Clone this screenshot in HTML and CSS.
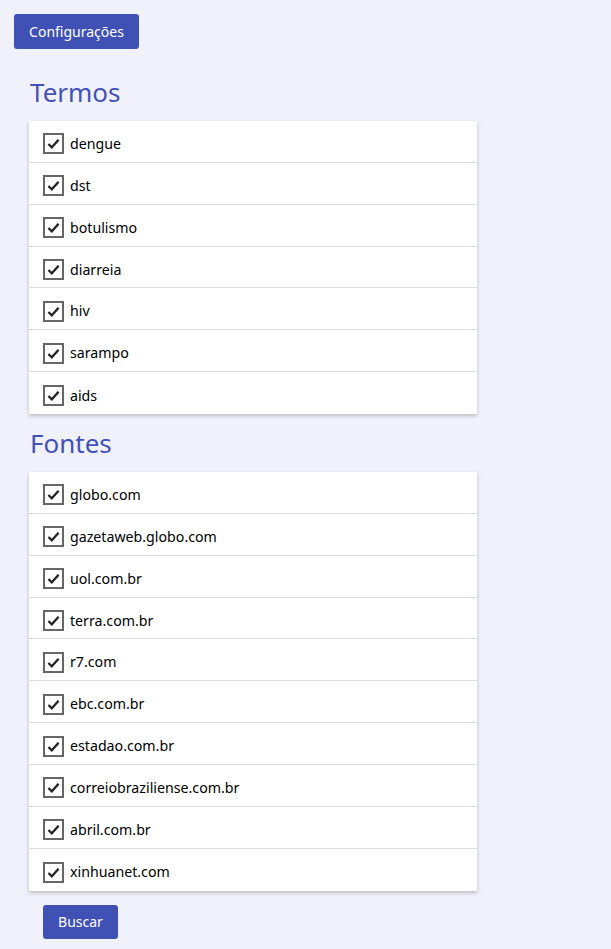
FILE: index.html
```html
<!DOCTYPE html>
<html lang="pt">
<head>
<meta charset="utf-8">
<link rel="stylesheet" href="styles.css">
</head>
<body>
<button class="btn btn-config">Configurações</button>
<div class="content">
  <h2 class="title">Termos</h2>
  <ul class="card">
    <li class="row"><span class="box"><svg viewBox="0 0 20 20"><path d="M4 10.5 L8 14.5 L16 5.5"/></svg></span><span class="label">dengue</span></li>
    <li class="row"><span class="box"><svg viewBox="0 0 20 20"><path d="M4 10.5 L8 14.5 L16 5.5"/></svg></span><span class="label">dst</span></li>
    <li class="row"><span class="box"><svg viewBox="0 0 20 20"><path d="M4 10.5 L8 14.5 L16 5.5"/></svg></span><span class="label">botulismo</span></li>
    <li class="row"><span class="box"><svg viewBox="0 0 20 20"><path d="M4 10.5 L8 14.5 L16 5.5"/></svg></span><span class="label">diarreia</span></li>
    <li class="row"><span class="box"><svg viewBox="0 0 20 20"><path d="M4 10.5 L8 14.5 L16 5.5"/></svg></span><span class="label">hiv</span></li>
    <li class="row"><span class="box"><svg viewBox="0 0 20 20"><path d="M4 10.5 L8 14.5 L16 5.5"/></svg></span><span class="label">sarampo</span></li>
    <li class="row"><span class="box"><svg viewBox="0 0 20 20"><path d="M4 10.5 L8 14.5 L16 5.5"/></svg></span><span class="label">aids</span></li>
  </ul>
  <h2 class="title">Fontes</h2>
  <ul class="card">
    <li class="row"><span class="box"><svg viewBox="0 0 20 20"><path d="M4 10.5 L8 14.5 L16 5.5"/></svg></span><span class="label">globo.com</span></li>
    <li class="row"><span class="box"><svg viewBox="0 0 20 20"><path d="M4 10.5 L8 14.5 L16 5.5"/></svg></span><span class="label">gazetaweb.globo.com</span></li>
    <li class="row"><span class="box"><svg viewBox="0 0 20 20"><path d="M4 10.5 L8 14.5 L16 5.5"/></svg></span><span class="label">uol.com.br</span></li>
    <li class="row"><span class="box"><svg viewBox="0 0 20 20"><path d="M4 10.5 L8 14.5 L16 5.5"/></svg></span><span class="label">terra.com.br</span></li>
    <li class="row"><span class="box"><svg viewBox="0 0 20 20"><path d="M4 10.5 L8 14.5 L16 5.5"/></svg></span><span class="label">r7.com</span></li>
    <li class="row"><span class="box"><svg viewBox="0 0 20 20"><path d="M4 10.5 L8 14.5 L16 5.5"/></svg></span><span class="label">ebc.com.br</span></li>
    <li class="row"><span class="box"><svg viewBox="0 0 20 20"><path d="M4 10.5 L8 14.5 L16 5.5"/></svg></span><span class="label">estadao.com.br</span></li>
    <li class="row"><span class="box"><svg viewBox="0 0 20 20"><path d="M4 10.5 L8 14.5 L16 5.5"/></svg></span><span class="label">correiobraziliense.com.br</span></li>
    <li class="row"><span class="box"><svg viewBox="0 0 20 20"><path d="M4 10.5 L8 14.5 L16 5.5"/></svg></span><span class="label">abril.com.br</span></li>
    <li class="row"><span class="box"><svg viewBox="0 0 20 20"><path d="M4 10.5 L8 14.5 L16 5.5"/></svg></span><span class="label">xinhuanet.com</span></li>
  </ul>
  <button class="btn btn-search">Buscar</button>
</div>
</body>
</html>
```
FILE: styles.css
```css
* { box-sizing: border-box; }
html, body { margin: 0; }
body {
  background: #f1f1fb;
  padding: 14px;
  font-family: "Noto Sans", "Open Sans", sans-serif;
  color: #000;
}
.btn {
  display: block;
  border: none;
  border-radius: 3px;
  background: #3f51b5;
  color: #fff;
  font-family: inherit;
  font-size: 14px;
  padding: 0;
  cursor: pointer;
}
.btn-config { width: 125px; height: 35px; }
.btn-search { width: 75px; height: 34px; margin: 14px 0 0 14px; }
.content { margin-left: 15px; width: 448px; }
.title {
  margin: 28px 0 13px 1px;
  font-size: 26px;
  line-height: 31px;
  font-weight: 400;
  color: #4352b8;
}
.card + .title { margin-top: 14px; }
.card {
  list-style: none;
  margin: 0;
  padding: 0;
  background: #fff;
  box-shadow: 0 2px 4px rgba(0,0,0,0.22);
}
.row {
  display: flex;
  align-items: center;
  height: 41.86px;
  padding: 5px 0 0 14px;
  border-bottom: 1px solid #dcdcdc;
}
.row:last-child { border-bottom: none; }
.box {
  width: 21px;
  height: 21px;
  border: 2px solid #666;
  display: flex;
  align-items: center;
  justify-content: center;
  margin-right: 6px;
  flex: none;
}
.box svg { width: 17px; height: 17px; }
.box path { fill: none; stroke: #222; stroke-width: 2.6; }
.label { font-size: 14.2px; line-height: 20px; }
```
